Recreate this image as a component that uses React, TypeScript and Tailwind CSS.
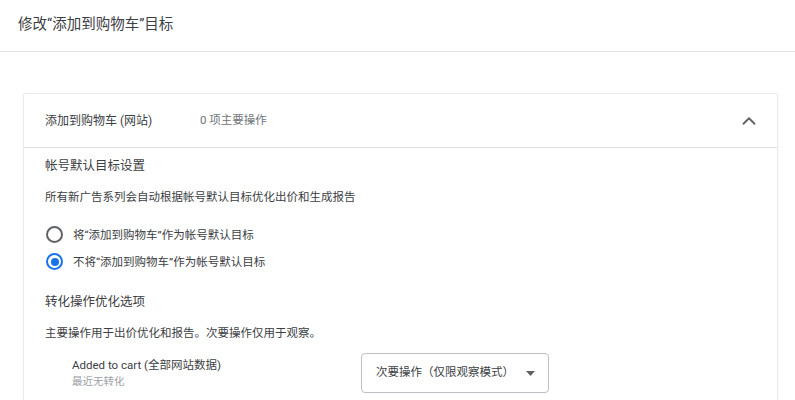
import { ChevronUp } from "lucide-react";

const font = {
  fontFamily: 'Roboto, "Noto Sans CJK SC", sans-serif',
};

function Radio({ checked, label }: { checked?: boolean; label: string }) {
  return (
    <label className="flex h-[27px] items-center cursor-pointer">
      <span
        className={
          checked
            ? "flex h-[17px] w-[17px] items-center justify-center rounded-full border-2 border-[#1a73e8]"
            : "flex h-[17px] w-[17px] items-center justify-center rounded-full border-2 border-[#5f6368]"
        }
      >
        {checked && <span className="h-[8px] w-[8px] rounded-full bg-[#1a73e8]" />}
      </span>
      <span className="ml-[10px] text-[11.5px] leading-[16px] text-[#3c4043]">{label}</span>
    </label>
  );
}

export default function App() {
  return (
    <div className="min-h-[400px] w-[795px] overflow-hidden bg-white" style={font}>
      {/* Page header */}
      <div className="flex h-[52px] items-center border-b border-[#e3e3e3] pl-[18px] pb-[2px]">
        <h1 className="text-[14.5px] font-normal text-[#3c4043]">修改“添加到购物车”目标</h1>
      </div>

      {/* Conversion card */}
      <div className="ml-[23px] mr-[17px] mt-[41px] rounded-t-[2px] border border-b-0 border-[#ebebeb] shadow-[0_1px_2px_rgba(60,64,67,0.1)]">
        <div className="flex h-[54px] items-center border-b border-[#dedede] pl-[21px] pr-[17px]">
          <span className="w-[155px] text-[12px] text-[#3c4043]">添加到购物车 (网站)</span>
          <span className="text-[11.5px] text-[#70757a]">0 项主要操作</span>
          <ChevronUp className="ml-auto h-[22px] w-[22px] text-[#5f6368]" strokeWidth={2} />
        </div>

        <div className="pl-[21px] pb-[20px] pt-[8px]">
          <h2 className="text-[12.5px] font-normal leading-[20px] text-[#3c4043]">帐号默认目标设置</h2>
          <p className="mt-[11px] text-[11.5px] leading-[20px] text-[#3c4043]">
            所有新广告系列会自动根据帐号默认目标优化出价和生成报告
          </p>

          <div className="mt-[14px] flex flex-col pl-[1px]">
            <Radio label="将“添加到购物车”作为帐号默认目标" />
            <Radio checked label="不将“添加到购物车”作为帐号默认目标" />
          </div>

          <h2 className="mt-[17px] text-[12.5px] font-normal leading-[20px] text-[#3c4043]">转化操作优化选项</h2>
          <p className="mt-[11px] text-[11.5px] leading-[20px] text-[#3c4043]">
            主要操作用于出价优化和报告。次要操作仅用于观察。
          </p>

          <div className="mt-[10px] flex">
            <div className="w-[316px] pl-[27px] pt-[4px]">
              <div className="text-[11.5px] leading-[16px] text-[#3c4043]">Added to cart (全部网站数据)</div>
              <div className="mt-[2px] text-[10.5px] leading-[14px] text-[#9aa0a6]">最近无转化</div>
            </div>
            <button className="flex h-[40px] w-[188px] items-center rounded-[4px] border border-[#bdc1c6] bg-white pl-[14px] pr-[13px]">
              <span className="text-[11.5px] text-[#3c4043]">次要操作（仅限观察模式）</span>
              <svg className="ml-auto" width="9" height="5" viewBox="0 0 9 5">
                <path d="M0 0 L9 0 L4.5 5 Z" fill="#5f6368" />
              </svg>
            </button>
          </div>
        </div>
      </div>
    </div>
  );
}
